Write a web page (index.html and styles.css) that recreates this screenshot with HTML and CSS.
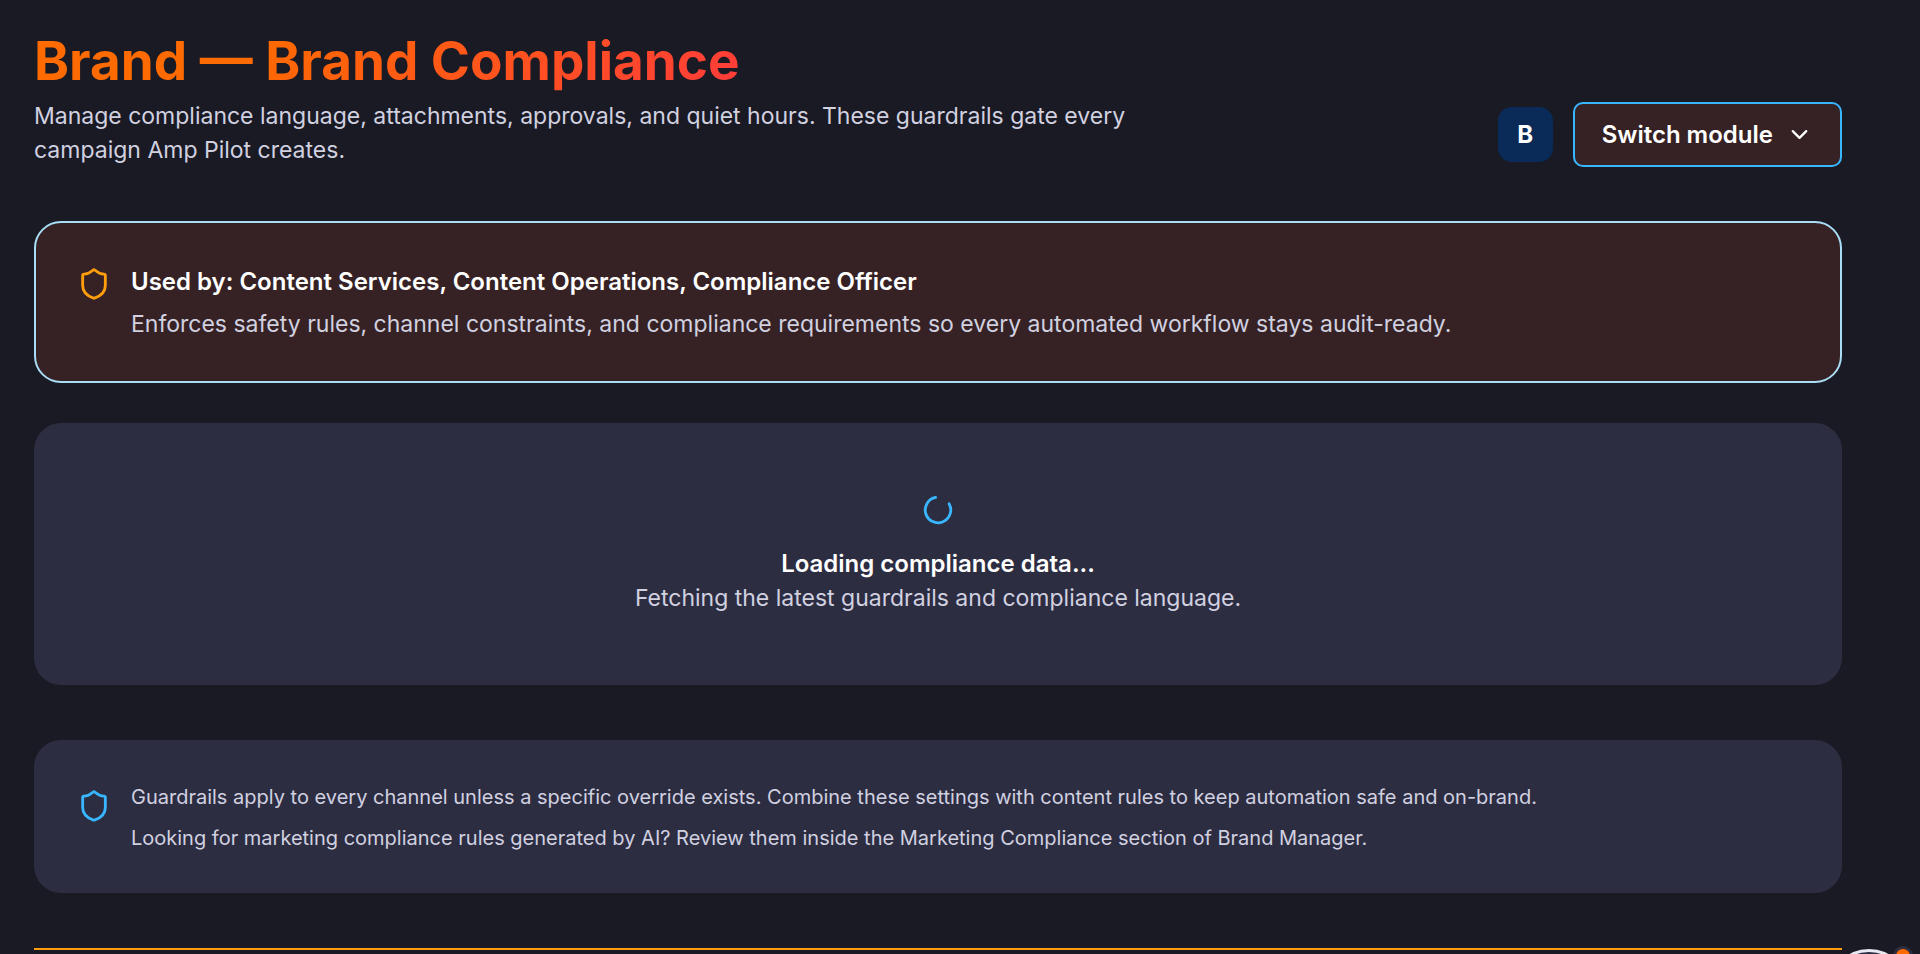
FILE: index.html
```html
<!DOCTYPE html>
<html lang="en">
<head>
    <meta charset="UTF-8">
    <meta name="viewport" content="width=device-width, initial-scale=1.0">
    <title>Brand Compliance</title>
    <link rel="stylesheet" href="styles.css">
</head>
<body>

    <main class="page">
        <header class="page-header">
            <div class="intro">
                <h1>Brand — Brand Compliance</h1>
                <p>Manage compliance language, attachments, approvals, and quiet hours. These guardrails gate every campaign Amp Pilot creates.</p>
            </div>
            <div class="actions">
                <span class="badge">B</span>
                <button class="switch-btn" type="button">
                    Switch module
                    <svg class="chevron" viewBox="0 0 24 24"><path d="m6 9 6 6 6-6"/></svg>
                </button>
            </div>
        </header>

        <section class="card used-by">
            <svg class="icon" viewBox="0 0 24 24"><path d="M20 13c0 5-3.5 7.5-7.66 8.95a1 1 0 0 1-.67-.01C7.5 20.5 4 18 4 13V6a1 1 0 0 1 1-1c2 0 4.5-1.2 6.24-2.72a1.17 1.17 0 0 1 1.52 0C14.51 3.81 17 5 19 5a1 1 0 0 1 1 1z"/></svg>
            <div>
                <h2>Used by: Content Services, Content Operations, Compliance Officer</h2>
                <p>Enforces safety rules, channel constraints, and compliance requirements so every automated workflow stays audit-ready.</p>
            </div>
        </section>

        <section class="card loading">
            <svg class="icon spinner" viewBox="0 0 24 24"><path d="M21 12a9 9 0 1 1-6.219-8.56"/></svg>
            <h2>Loading compliance data...</h2>
            <p>Fetching the latest guardrails and compliance language.</p>
        </section>

        <section class="card notes">
            <svg class="icon" viewBox="0 0 24 24"><path d="M20 13c0 5-3.5 7.5-7.66 8.95a1 1 0 0 1-.67-.01C7.5 20.5 4 18 4 13V6a1 1 0 0 1 1-1c2 0 4.5-1.2 6.24-2.72a1.17 1.17 0 0 1 1.52 0C14.51 3.81 17 5 19 5a1 1 0 0 1 1 1z"/></svg>
            <div>
                <p>Guardrails apply to every channel unless a specific override exists. Combine these settings with content rules to keep automation safe and on-brand.</p>
                <p>Looking for marketing compliance rules generated by AI? Review them inside the Marketing Compliance section of Brand Manager.</p>
            </div>
        </section>

        <hr class="divider">
    </main>

    <button class="assistant" type="button" aria-label="Open assistant">
        <span class="dot"></span>
    </button>

</body>
</html>
```

FILE: styles.css
```css
* {
    box-sizing: border-box;
}
body {
    margin: 0;
    background-color: #1a1a24;
    color: #d1d1e0;
    font-family: Inter, sans-serif;
    font-size: 23px;
    line-height: 34px;
}
h1, h2, p {
    margin: 0;
}
.page {
    padding: 31px 78px 0 34px;
}
.page-header {
    display: flex;
    align-items: flex-end;
    justify-content: space-between;
    margin-bottom: 54px;
}
.intro {
    max-width: 1120px;
}
h1 {
    width: fit-content;
    margin-bottom: 8px;
    background: linear-gradient(135deg, #ff6b00 0%, #ff6b00 30%, #ff3b3b 100%);
    background-clip: text;
    -webkit-background-clip: text;
    color: transparent;
    font-size: 53px;
    font-weight: 700;
    line-height: 60px;
}
h2 {
    color: #fff;
    font-size: 24px;
    font-weight: 600;
}
.actions {
    display: flex;
    align-items: center;
    gap: 20px;
}
.badge {
    display: flex;
    align-items: center;
    justify-content: center;
    width: 55px;
    height: 55px;
    border-radius: 14px;
    background-color: #0a2a57;
    color: #fff;
    font-size: 24px;
    font-weight: 700;
}
.switch-btn {
    display: flex;
    align-items: center;
    gap: 13px;
    height: 65px;
    padding: 0 27px;
    border: 2px solid #38b6ff;
    border-radius: 10px;
    background-color: #362224;
    color: #fff;
    font-family: inherit;
    font-size: 24px;
    font-weight: 600;
    cursor: pointer;
}
svg {
    flex: none;
    fill: none;
    stroke: currentColor;
    stroke-width: 2;
    stroke-linecap: round;
    stroke-linejoin: round;
}
.chevron {
    width: 27px;
    height: 27px;
}
.icon {
    width: 34px;
    height: 34px;
}
.card {
    display: flex;
    gap: 20px;
    border-radius: 27px;
    background-color: #2d2d42;
}
.used-by {
    margin-bottom: 40px;
    padding: 42px 41px 40px;
    border: 2px solid #a9dcf5;
    background-color: #362224;
}
.used-by .icon {
    margin-top: 2px;
    color: #ff9e0d;
}
.used-by h2 {
    margin-bottom: 8px;
}
.loading {
    flex-direction: column;
    align-items: center;
    gap: 0;
    margin-bottom: 55px;
    padding: 70px 41px;
    text-align: center;
}
.spinner {
    margin-bottom: 20px;
    color: #38b6ff;
    transform: rotate(-29deg);
}
.notes {
    margin-bottom: 55px;
    padding: 40px 43px 38px;
    font-size: 20px;
}
.notes .icon {
    margin-top: 9px;
    color: #38b6ff;
}
.notes p + p {
    margin-top: 7px;
}
.divider {
    height: 2px;
    margin: 0;
    border: none;
    background-color: #ff9e0d;
}
.assistant {
    position: fixed;
    right: 10px;
    bottom: -77px;
    width: 82px;
    height: 82px;
    border: 3px solid #e8e8f0;
    border-radius: 50%;
    background-color: #2d2d42;
    cursor: pointer;
}
.dot {
    position: absolute;
    top: -6px;
    right: -6px;
    width: 20px;
    height: 20px;
    border: 3px solid #2d2d42;
    border-radius: 50%;
    background-color: #ff6b00;
}
```
